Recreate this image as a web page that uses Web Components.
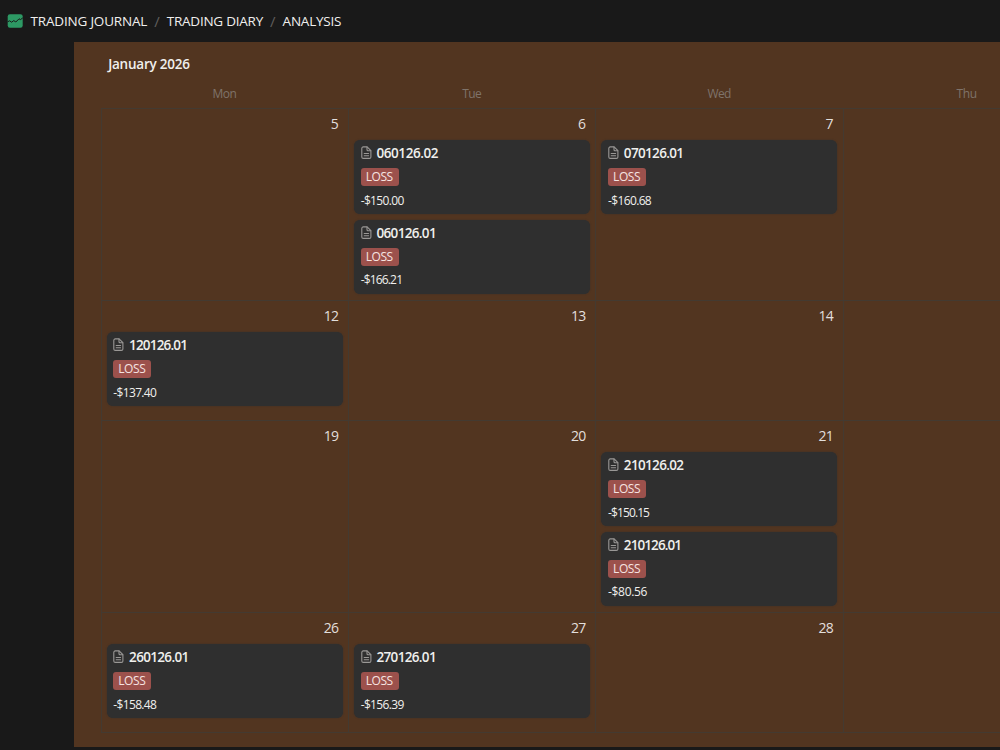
<!DOCTYPE html>
<html lang="en">
<head>
<meta charset="utf-8">
<title>Trading Diary – Analysis</title>
<style>
html,body{margin:0;height:100%;background:#191919;overflow:hidden}
body{font-family:"Open Sans","Noto Sans",sans-serif;color:#e6e4e2}
</style>
</head>
<body>
<journal-app></journal-app>
<script>
const define = (name, cls) => customElements.define(name, cls);

/* A single line of text tracked so that it fills a given width. */
define('fit-text', class extends HTMLElement {
  connectedCallback() {
    if (this.shadowRoot) return;
    this.attachShadow({mode: 'open'}).innerHTML =
      '<style>:host{display:inline-block;white-space:nowrap;flex:none}span{display:inline-block}</style><span><slot></slot></span>';
    const span = this.shadowRoot.querySelector('span');
    const target = +this.getAttribute('w');
    const n = this.textContent.length;
    const gap = (target - span.getBoundingClientRect().width) / n;
    span.style.letterSpacing = gap.toFixed(3) + 'px';
    this.style.width = target + 'px';
  }
});

define('page-icon', class extends HTMLElement {
  constructor() {
    super();
    this.attachShadow({mode: 'open'}).innerHTML = `
      <style>:host{display:block;flex:none;width:11px;height:14px}svg{display:block}</style>
      <svg width="11" height="14" viewBox="0 0 11 14" fill="none" stroke="#9a9896" stroke-width="1.1" stroke-linejoin="round" stroke-linecap="round">
        <path d="M2.3 .9H6.1L9.9 4.7V10.9A1.5 1.5 0 0 1 8.4 12.4H2.3A1.5 1.5 0 0 1 .8 10.9V2.4A1.5 1.5 0 0 1 2.3 .9Z"/>
        <path d="M6 1.1V3.8A1 1 0 0 0 7 4.8H9.7"/>
        <path d="M3.2 7.5H7.6M3.2 9.7H7.6"/>
      </svg>`;
  }
});

define('app-breadcrumb', class extends HTMLElement {
  constructor() {
    super();
    this.attachShadow({mode: 'open'}).innerHTML = `
      <style>
        :host{display:flex;align-items:center;height:42px;padding-left:7px;box-sizing:border-box;font-size:13.5px;line-height:18px;color:#f0efed}
        svg{display:block;margin-right:7.5px;flex:none}
        i{font-style:normal;color:#5f5e5c;width:19.6px;text-align:center;font-size:15px}
      </style>
      <svg width="16" height="15" viewBox="0 0 16 15">
        <rect x=".7" y=".3" width="15" height="13.4" rx="2.2" fill="#2d9964"/>
        <path d="M.7 7.8L2.6 6.8L4.6 8.2L6.8 6.6L8.8 8L12 4.8L13.4 5.6L15.7 4" fill="none" stroke="#191919" stroke-width="1"/>
      </svg>
      <fit-text w="116.7">TRADING JOURNAL</fit-text><i>/</i>
      <fit-text w="96.2">TRADING DIARY</fit-text><i>/</i>
      <fit-text w="58.7">ANALYSIS</fit-text>`;
  }
});

define('trade-card', class extends HTMLElement {
  connectedCallback() {
    if (this.shadowRoot) return;
    const a = n => this.getAttribute(n);
    this.attachShadow({mode: 'open'}).innerHTML = `
      <style>
        :host{display:block;box-sizing:border-box;height:74px;padding:5px 6.6px;border-radius:6px;background:#2f2f2f;box-shadow:0 0 1.5px #2f3031}
        .head{display:flex;align-items:center;height:16px;gap:4.8px;font-size:13.5px;font-weight:600;line-height:16px;color:#f0efed}
        .tag{display:flex;align-items:center;justify-content:center;width:38px;height:18px;margin-top:7px;border-radius:3px;background:#9c514c;font-size:12px;line-height:18px;color:#f6e3e1}
        .tag fit-text{margin-right:1px}
        .pnl{margin-top:6.6px;font-size:12px;line-height:16px;height:16px;display:flex;color:#f0efed}
      </style>
      <div class="head"><page-icon></page-icon><fit-text w="${a('tw')}">${a('name')}</fit-text></div>
      <div class="tag"><fit-text w="27">LOSS</fit-text></div>
      <div class="pnl"><fit-text w="${a('pw')}">${a('pnl')}</fit-text></div>`;
  }
});

define('day-cell', class extends HTMLElement {
  connectedCallback() {
    if (this.shadowRoot) return;
    const d = this.getAttribute('day');
    this.attachShadow({mode: 'open'}).innerHTML = `
      <style>
        :host{display:block;box-sizing:border-box;border-left:1px solid #433a31;border-top:1px solid #433a31;padding:0 5.4px 0 5px;min-width:0}
        .num{height:31.5px;padding:6px 4.5px 0 0;box-sizing:border-box;display:flex;justify-content:flex-end;font-size:14px;line-height:18px;color:#e2dfdc}
        .cards{display:flex;flex-direction:column;gap:5.5px}
      </style>
      <div class="num">${d ? `<fit-text w="${d.length > 1 ? 14.5 : 7.5}">${d}</fit-text>` : ''}</div>
      <div class="cards"><slot></slot></div>`;
  }
});

define('month-calendar', class extends HTMLElement {
  constructor() {
    super();
    const card = (name, tw, pnl, pw) => `<trade-card name="${name}" tw="${tw}" pnl="${pnl}" pw="${pw}"></trade-card>`;
    const cell = (d, ...c) => `<day-cell day="${d}">${c.join('')}</day-cell>`;
    this.attachShadow({mode: 'open'}).innerHTML = `
      <style>
        :host{display:block;box-sizing:border-box;height:705px;padding-left:26.7px;background:#523520;overflow:hidden}
        h1{margin:0;padding:12px 0 0 7.5px;height:42px;box-sizing:border-box;font-size:13.5px;line-height:20px;font-weight:600;color:#f0efed}
        .week,.grid{display:grid;grid-template-columns:repeat(4,247.4px)}
        .week{height:23.5px;font-size:12px;line-height:19px;color:#7f736a;text-align:center}
        .grid{grid-template-rows:192px 120px 192px 120px;width:989.6px;border-bottom:1px solid #433a31}
      </style>
      <h1><fit-text w="81.5">January 2026</fit-text></h1>
      <div class="week"><div><fit-text w="24">Mon</fit-text></div><div><fit-text w="19">Tue</fit-text></div><div><fit-text w="23.5">Wed</fit-text></div><div><fit-text w="20">Thu</fit-text></div></div>
      <div class="grid">
        ${cell('5')}
        ${cell('6', card('060126.02', 61.7, '-$150.00', 43), card('060126.01', 59.5, '-$166.21', 41.5))}
        ${cell('7', card('070126.01', 59.5, '-$160.68', 43))}
        ${cell('')}
        ${cell('12', card('120126.01', 58, '-$137.40', 43))}
        ${cell('13')}${cell('14')}${cell('')}
        ${cell('19')}${cell('20')}
        ${cell('21', card('210126.02', 59.5, '-$150.15', 41), card('210126.01', 57.3, '-$80.56', 39))}
        ${cell('')}
        ${cell('26', card('260126.01', 59.5, '-$158.48', 43))}
        ${cell('27', card('270126.01', 59.5, '-$156.39', 43))}
        ${cell('28')}${cell('')}
      </div>`;
  }
});

define('journal-app', class extends HTMLElement {
  constructor() {
    super();
    this.attachShadow({mode: 'open'}).innerHTML = `
      <style>:host{display:block;width:1000px;height:750px;overflow:hidden}month-calendar{margin-left:74px}</style>
      <app-breadcrumb></app-breadcrumb>
      <month-calendar></month-calendar>`;
  }
});
</script>
</body>
</html>
